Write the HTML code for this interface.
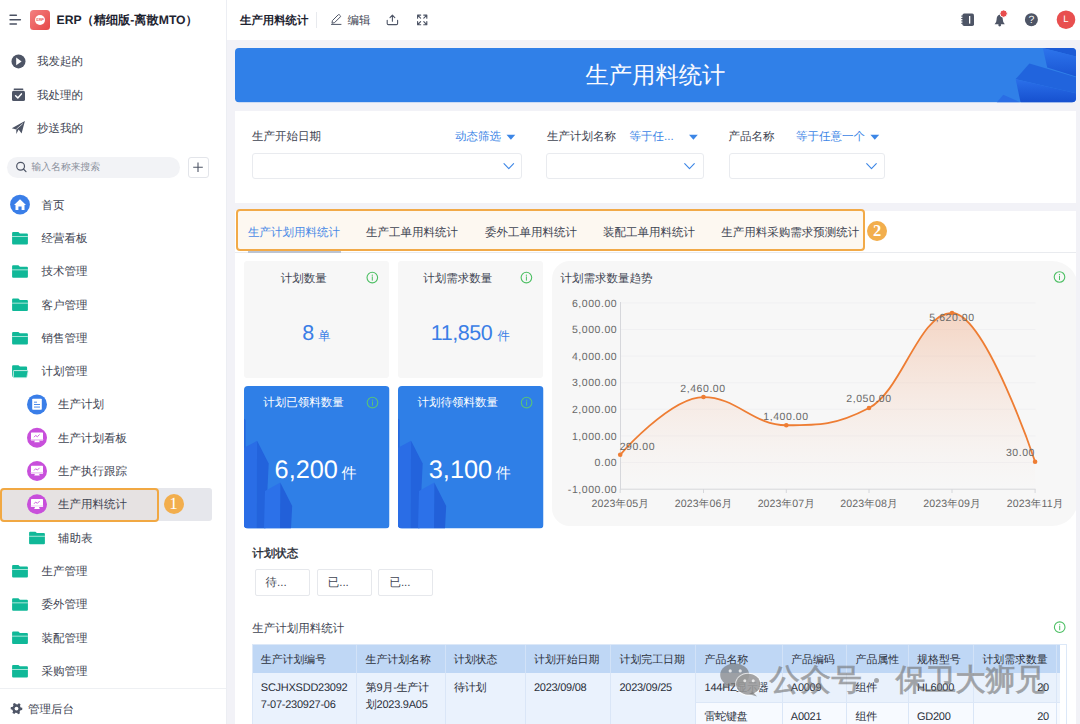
<!DOCTYPE html>
<html><head><meta charset="utf-8">
<style>
*{box-sizing:border-box;margin:0;padding:0}
html,body{text-rendering:geometricPrecision;width:1080px;height:724px;overflow:hidden;background:#f2f2f7;font-family:"Liberation Sans",sans-serif;color:#1f2329}
.a{position:absolute;white-space:nowrap}
svg.a{overflow:visible}
.t{position:absolute;white-space:nowrap;height:20px;line-height:20px}
</style></head><body>

<div class="a" style="left:0;top:0;width:226px;height:724px;background:#fff"></div>
<div class="a" style="left:226px;top:0;width:1px;height:724px;background:#eceef3"></div>
<svg class="a" style="left:0;top:0" width="30" height="40">
<rect x="9.3" y="14.4" width="7.8" height="1.5" rx="0.75" fill="#4b5263"/>
<rect x="9.3" y="19" width="11.8" height="1.5" rx="0.75" fill="#4b5263"/>
<rect x="9.3" y="23.3" width="7.8" height="1.5" rx="0.75" fill="#4b5263"/>
</svg>
<div class="a" style="left:30px;top:10px;width:20px;height:20px;border-radius:3.5px;background:linear-gradient(135deg,#f38080,#e64848)"></div>
<div class="a" style="left:35px;top:15px;width:10px;height:10px;border-radius:50%;background:#fff"></div>
<div class="a" style="left:35px;top:15px;width:10px;height:10px;font-size:4px;line-height:10px;text-align:center;color:#e95a5a;font-weight:bold;letter-spacing:-0.2px">ERP</div>
<div class="t" style="left:56.5px;top:10px;font-size:12.2px;font-weight:bold;color:#1d2330">ERP（精细版-离散MTO）</div>
<svg class="a" style="left:0;top:0" width="40" height="140">
<circle cx="18.5" cy="61.4" r="7" fill="#4e5566"/>
<path d="M16.2 57.6 L21.6 61.4 L16.2 65.2 Z" fill="#fff"/>
<rect x="13.6" y="88.6" width="9.8" height="1.3" rx="0.6" fill="#4e5566"/>
<rect x="12" y="90.8" width="13" height="10.2" rx="1.6" fill="#4e5566"/>
<path d="M15.6 95.8 L17.8 97.9 L21.4 93.9" stroke="#fff" stroke-width="1.5" fill="none" stroke-linecap="round" stroke-linejoin="round"/>
<path d="M11.8 128.2 L24.9 121 L21.6 133.5 L18.6 129.6 L16.4 134 L16.2 129.4 Z" fill="#4e5566"/>
<path d="M16.3 129.3 L22.8 123.6" stroke="#fff" stroke-width="0.7"/>
</svg>
<div class="t" style="left:37px;top:52.20px;font-size:11.5px;color:#3e4452;font-weight:normal">我发起的</div>
<div class="t" style="left:37px;top:85.70px;font-size:11.5px;color:#3e4452;font-weight:normal">我处理的</div>
<div class="t" style="left:37px;top:118.70px;font-size:11.5px;color:#3e4452;font-weight:normal">抄送我的</div>
<div class="a" style="left:7px;top:156.5px;width:173px;height:21px;border-radius:11px;background:#f2f3f6"></div>
<svg class="a" style="left:0;top:0" width="40" height="180">
<circle cx="20.6" cy="166.2" r="3.9" stroke="#4e5566" stroke-width="1.2" fill="none"/>
<path d="M23.4 169 L26 171.6" stroke="#4e5566" stroke-width="1.2" stroke-linecap="round"/>
</svg>
<div class="t" style="left:31.5px;top:157.70px;font-size:9.8px;color:#8a909c;font-weight:normal">输入名称来搜索</div>
<div class="a" style="left:187.5px;top:156.5px;width:21px;height:21px;border-radius:3px;border:1px solid #e3e5ea;background:#fff"></div>
<svg class="a" style="left:0;top:0" width="220" height="180">
<path d="M198 162.5 V172 M193.2 167.2 H202.8" stroke="#4e5566" stroke-width="1.1"/>
</svg>
<div class="a" style="left:1px;top:488px;width:211px;height:33px;border-radius:3px;background:#e6e7ec"></div>
<div class="a" style="left:0px;top:487.5px;width:159px;height:34px;border-radius:4px;border:2px solid #f1a843;background:rgba(240,160,60,0.06)"></div>
<div class="a" style="left:163.5px;top:494px;width:20px;height:20px;border-radius:50%;background:#f2ae4d;color:#fff;font-family:'Liberation Serif',serif;font-size:17px;line-height:20px;text-align:center">1</div>
<div class="t" style="left:41.5px;top:195.60px;font-size:11.5px;color:#3e4452;font-weight:normal">首页</div>
<div class="t" style="left:41.5px;top:228.90px;font-size:11.5px;color:#3e4452;font-weight:normal">经营看板</div>
<div class="t" style="left:41.5px;top:262.20px;font-size:11.5px;color:#3e4452;font-weight:normal">技术管理</div>
<div class="t" style="left:41.5px;top:295.50px;font-size:11.5px;color:#3e4452;font-weight:normal">客户管理</div>
<div class="t" style="left:41.5px;top:328.80px;font-size:11.5px;color:#3e4452;font-weight:normal">销售管理</div>
<div class="t" style="left:41.5px;top:362.10px;font-size:11.5px;color:#3e4452;font-weight:normal">计划管理</div>
<div class="t" style="left:58px;top:395.40px;font-size:11.5px;color:#3e4452;font-weight:normal">生产计划</div>
<div class="t" style="left:58px;top:428.70px;font-size:11.5px;color:#3e4452;font-weight:normal">生产计划看板</div>
<div class="t" style="left:58px;top:462.00px;font-size:11.5px;color:#3e4452;font-weight:normal">生产执行跟踪</div>
<div class="t" style="left:58px;top:495.30px;font-size:11.5px;color:#3e4452;font-weight:normal">生产用料统计</div>
<div class="t" style="left:58px;top:528.60px;font-size:11.5px;color:#3e4452;font-weight:normal">辅助表</div>
<div class="t" style="left:41.5px;top:561.90px;font-size:11.5px;color:#3e4452;font-weight:normal">生产管理</div>
<div class="t" style="left:41.5px;top:595.20px;font-size:11.5px;color:#3e4452;font-weight:normal">委外管理</div>
<div class="t" style="left:41.5px;top:628.50px;font-size:11.5px;color:#3e4452;font-weight:normal">装配管理</div>
<div class="t" style="left:41.5px;top:661.80px;font-size:11.5px;color:#3e4452;font-weight:normal">采购管理</div>
<svg class="a" style="left:0;top:0" width="60" height="724"><circle cx="20" cy="204.6" r="9.9" fill="#3a7ee8"/><path d="M20 199.29999999999998 L26 204.9 L24.5 204.9 L24.5 209.9 L21.6 209.9 L21.6 206.6 L18.4 206.6 L18.4 209.9 L15.5 209.9 L15.5 204.9 L14 204.9 Z" fill="#fff"/><path d="M12.1 232.99999999999997 Q12.1 231.99999999999997 13.1 231.99999999999997 L18.4 231.99999999999997 L19.9 233.39999999999998 L26.9 233.39999999999998 Q27.9 233.39999999999998 27.9 234.39999999999998 L27.9 243.49999999999997 Q27.9 244.49999999999997 26.9 244.49999999999997 L13.1 244.49999999999997 Q12.1 244.49999999999997 12.1 243.49999999999997 Z" fill="#10b898"/><rect x="12.1" y="236.09999999999997" width="15.8" height="0.9" fill="#b8eadf"/><path d="M12.1 266.3 Q12.1 265.3 13.1 265.3 L18.4 265.3 L19.9 266.7 L26.9 266.7 Q27.9 266.7 27.9 267.7 L27.9 276.8 Q27.9 277.8 26.9 277.8 L13.1 277.8 Q12.1 277.8 12.1 276.8 Z" fill="#10b898"/><rect x="12.1" y="269.4" width="15.8" height="0.9" fill="#b8eadf"/><path d="M12.1 299.6 Q12.1 298.6 13.1 298.6 L18.4 298.6 L19.9 300.0 L26.9 300.0 Q27.9 300.0 27.9 301.0 L27.9 310.1 Q27.9 311.1 26.9 311.1 L13.1 311.1 Q12.1 311.1 12.1 310.1 Z" fill="#10b898"/><rect x="12.1" y="302.7" width="15.8" height="0.9" fill="#b8eadf"/><path d="M12.1 332.9 Q12.1 331.9 13.1 331.9 L18.4 331.9 L19.9 333.29999999999995 L26.9 333.29999999999995 Q27.9 333.29999999999995 27.9 334.29999999999995 L27.9 343.4 Q27.9 344.4 26.9 344.4 L13.1 344.4 Q12.1 344.4 12.1 343.4 Z" fill="#10b898"/><rect x="12.1" y="335.99999999999994" width="15.8" height="0.9" fill="#b8eadf"/><path d="M12.1 376.70000000000005 L12.1 366.20000000000005 Q12.1 365.20000000000005 13.1 365.20000000000005 L18.4 365.20000000000005 L19.9 366.6 L26.1 366.6 Q27.1 366.6 27.1 367.6 L27.1 369.90000000000003 L13.7 369.90000000000003 L12.7 376.70000000000005 Z" fill="#10b898"/><path d="M14.2 370.6 L27.4 370.6 Q28.1 370.6 28.0 371.40000000000003 L26.9 376.90000000000003 Q26.7 377.70000000000005 25.9 377.70000000000005 L14.0 377.70000000000005 Q13.2 377.70000000000005 13.299999999999999 376.90000000000003 L13.5 371.3 Q13.6 370.6 14.2 370.6 Z" fill="#10b898" stroke="#c5eee4" stroke-width="0.8"/><circle cx="37" cy="404.4" r="10" fill="#3a7ee8"/><rect x="32.2" y="398.79999999999995" width="9.6" height="11" rx="0.8" fill="#fff"/><rect x="34" y="401.7" width="3" height="0.9" fill="#3a7ee8"/><rect x="34" y="404.09999999999997" width="6" height="0.9" fill="#3a7ee8"/><rect x="34" y="406.59999999999997" width="6" height="0.9" fill="#3a7ee8"/><circle cx="37" cy="437.69999999999993" r="10" fill="#c84fdb"/><rect x="31" y="432.49999999999994" width="12" height="8" rx="0.6" fill="#fff"/><path d="M34 437.19999999999993 L35.6 435.49999999999994 L37.4 436.69999999999993 L39.6 434.49999999999994" stroke="#c84fdb" stroke-width="0.9" fill="none"/><rect x="30.6" y="438.99999999999994" width="12.8" height="0.7" fill="#e9b6f0"/><path d="M35 440.49999999999994 L39 440.49999999999994 L39.8 442.29999999999995 L34.2 442.29999999999995 Z" fill="#fff"/><circle cx="37" cy="471.0" r="10" fill="#c84fdb"/><rect x="31" y="465.8" width="12" height="8" rx="0.6" fill="#fff"/><path d="M34 470.5 L35.6 468.8 L37.4 470.0 L39.6 467.8" stroke="#c84fdb" stroke-width="0.9" fill="none"/><rect x="30.6" y="472.3" width="12.8" height="0.7" fill="#e9b6f0"/><path d="M35 473.8 L39 473.8 L39.8 475.6 L34.2 475.6 Z" fill="#fff"/><circle cx="37" cy="504.29999999999995" r="10" fill="#c84fdb"/><rect x="31" y="499.09999999999997" width="12" height="8" rx="0.6" fill="#fff"/><path d="M34 503.79999999999995 L35.6 502.09999999999997 L37.4 503.29999999999995 L39.6 501.09999999999997" stroke="#c84fdb" stroke-width="0.9" fill="none"/><rect x="30.6" y="505.59999999999997" width="12.8" height="0.7" fill="#e9b6f0"/><path d="M35 507.09999999999997 L39 507.09999999999997 L39.8 508.9 L34.2 508.9 Z" fill="#fff"/><path d="M29.1 532.7 Q29.1 531.7 30.1 531.7 L35.4 531.7 L36.9 533.1 L43.900000000000006 533.1 Q44.900000000000006 533.1 44.900000000000006 534.1 L44.900000000000006 543.2 Q44.900000000000006 544.2 43.900000000000006 544.2 L30.1 544.2 Q29.1 544.2 29.1 543.2 Z" fill="#10b898"/><rect x="29.1" y="535.8000000000001" width="15.8" height="0.9" fill="#b8eadf"/><path d="M12.1 566.0 Q12.1 565.0 13.1 565.0 L18.4 565.0 L19.9 566.4 L26.9 566.4 Q27.9 566.4 27.9 567.4 L27.9 576.5 Q27.9 577.5 26.9 577.5 L13.1 577.5 Q12.1 577.5 12.1 576.5 Z" fill="#10b898"/><rect x="12.1" y="569.1" width="15.8" height="0.9" fill="#b8eadf"/><path d="M12.1 599.3 Q12.1 598.3 13.1 598.3 L18.4 598.3 L19.9 599.6999999999999 L26.9 599.6999999999999 Q27.9 599.6999999999999 27.9 600.6999999999999 L27.9 609.8 Q27.9 610.8 26.9 610.8 L13.1 610.8 Q12.1 610.8 12.1 609.8 Z" fill="#10b898"/><rect x="12.1" y="602.4" width="15.8" height="0.9" fill="#b8eadf"/><path d="M12.1 632.6 Q12.1 631.6 13.1 631.6 L18.4 631.6 L19.9 633.0 L26.9 633.0 Q27.9 633.0 27.9 634.0 L27.9 643.1 Q27.9 644.1 26.9 644.1 L13.1 644.1 Q12.1 644.1 12.1 643.1 Z" fill="#10b898"/><rect x="12.1" y="635.7" width="15.8" height="0.9" fill="#b8eadf"/><path d="M12.1 665.9 Q12.1 664.9 13.1 664.9 L18.4 664.9 L19.9 666.3 L26.9 666.3 Q27.9 666.3 27.9 667.3 L27.9 676.4 Q27.9 677.4 26.9 677.4 L13.1 677.4 Q12.1 677.4 12.1 676.4 Z" fill="#10b898"/><rect x="12.1" y="669.0" width="15.8" height="0.9" fill="#b8eadf"/></svg>
<div class="a" style="left:0;top:688px;width:226px;height:1px;background:#eef0f3"></div>
<svg class="a" style="left:0;top:0" width="30" height="724"><polygon points="22.30,708.60 22.25,709.36 22.10,710.10 20.47,710.25 20.22,710.75 19.91,711.22 19.54,711.64 20.03,713.20 19.40,713.62 18.72,713.96 18.00,714.20 17.06,712.86 16.50,712.90 15.94,712.86 15.39,712.75 14.28,713.96 13.60,713.62 12.97,713.20 12.40,712.70 13.09,711.22 12.78,710.75 12.53,710.25 12.35,709.71 10.75,709.36 10.70,708.60 10.75,707.84 10.90,707.10 12.53,706.95 12.78,706.45 13.09,705.98 13.46,705.56 12.97,704.00 13.60,703.58 14.28,703.24 15.00,703.00 15.94,704.34 16.50,704.30 17.06,704.34 17.61,704.45 18.72,703.24 19.40,703.58 20.03,704.00 20.60,704.50 19.91,705.98 20.22,706.45 20.47,706.95 20.65,707.49 22.25,707.84" fill="#4e5566"/><circle cx="16.5" cy="708.6" r="1.9" fill="#fff"/></svg>
<div class="t" style="left:28px;top:699.70px;font-size:11.5px;color:#3e4452;font-weight:normal">管理后台</div>
<div class="a" style="left:227px;top:0;width:853px;height:40px;background:#fff"></div>
<div class="t" style="left:240px;top:11.20px;font-size:11.4px;color:#1d2330;font-weight:bold">生产用料统计</div>
<div class="a" style="left:316px;top:12px;width:1px;height:15.5px;background:#e8eaee"></div>
<svg class="a" style="left:0;top:0" width="1080" height="40">
<path d="M331.5 24.4 H341" stroke="#4e5566" stroke-width="1" stroke-linecap="round"/>
<path d="M332 23.2 L332.4 20.6 L338.2 14.8 Q338.8 14.3 339.4 14.8 L340.3 15.7 Q340.8 16.3 340.3 16.9 L334.5 22.7 Z" stroke="#4e5566" stroke-width="1" fill="none" stroke-linejoin="round"/>
<path d="M392.4 21.2 V15.2 M390 17.6 L392.4 15.2 L394.8 17.6" stroke="#4e5566" stroke-width="1.1" fill="none" stroke-linecap="round" stroke-linejoin="round"/>
<path d="M387.2 20.2 V23.4 Q387.2 24.6 388.4 24.6 H396.4 Q397.6 24.6 397.6 23.4 V20.2" stroke="#4e5566" stroke-width="1.1" fill="none" stroke-linecap="round"/>
<g stroke="#4e5566" stroke-width="1.15" fill="none" stroke-linecap="round" stroke-linejoin="round">
<path d="M417.6 18.2 V15.1 H420.7 M417.8 15.3 L420.6 18.1"/>
<path d="M426.8 18.2 V15.1 H423.7 M426.6 15.3 L423.8 18.1"/>
<path d="M417.6 21.6 V24.7 H420.7 M417.8 24.5 L420.6 21.7"/>
<path d="M426.8 21.6 V24.7 H423.7 M426.6 24.5 L423.8 21.7"/>
</g>
<rect x="962.4" y="13.6" width="11.6" height="12.4" rx="1.8" fill="#4e5566"/>
<rect x="961.2" y="15.6" width="2.2" height="1" fill="#4e5566"/>
<rect x="961.2" y="18" width="2.2" height="1" fill="#4e5566"/>
<rect x="961.2" y="20.4" width="2.2" height="1" fill="#4e5566"/>
<rect x="961.2" y="22.8" width="2.2" height="1" fill="#4e5566"/>
<rect x="969" y="16" width="1.3" height="7.6" fill="#fff"/>
<path d="M994.6 24.3 Q996.6 22.6 996.6 19.6 Q996.6 15.6 999.7 14.6 Q1002.8 15.6 1002.8 19.6 Q1002.8 22.6 1004.8 24.3 Z" fill="#4e5566"/>
<circle cx="999.7" cy="25" r="1.4" fill="#4e5566"/>
<circle cx="1003.6" cy="13.6" r="3.7" fill="#e84d4d" stroke="#fff" stroke-width="1"/>
<circle cx="1031.4" cy="19.7" r="6.5" fill="#4e5566"/>
<circle cx="1066" cy="19.7" r="9.3" fill="#e84f4f"/>
</svg>
<div class="a" style="left:1025.4px;top:13.7px;width:12px;height:12px;font-size:10.5px;line-height:12px;text-align:center;color:#fff">?</div>
<div class="a" style="left:1060px;top:13.7px;width:12px;height:12px;font-size:9.5px;line-height:12px;text-align:center;color:#fff">L</div>
<svg class="a" style="left:235px;top:48.2px" width="841" height="54.4" viewBox="0 0 841 54" preserveAspectRatio="none">
<defs>
<clipPath id="bc"><rect x="0" y="0" width="841" height="54" rx="4"/></clipPath>
<linearGradient id="g1" x1="0" y1="0" x2="0" y2="1"><stop offset="0" stop-color="#2d74ec"/><stop offset="1" stop-color="#1a56d4"/></linearGradient>
<linearGradient id="g2" x1="0" y1="0" x2="0" y2="1"><stop offset="0" stop-color="#2b70ea"/><stop offset="1" stop-color="#1650cf"/></linearGradient>
</defs>
<g clip-path="url(#bc)">
<rect x="0" y="0" width="841" height="54" fill="#3080e8"/>
<path d="M807.8 0 L841 0 L841 8.5 Z" fill="#1c5bd6"/>
<path d="M807.8 0 L812.2 19.3 L841 28.2 L841 8.5 Z" fill="url(#g1)"/>
<path d="M780.6 30.9 L794.4 15.4 L841 29 L841 45 Z" fill="#2164dd"/>
<path d="M780.6 30.9 L841 45 L841 54 L785.6 54 Z" fill="url(#g2)"/>
<path d="M761.7 54 L768.3 46.5 L785.6 54 Z" fill="#2a6de4"/>
</g>
</svg>
<div class="a" style="left:585.5px;top:58.8px;height:32px;line-height:32px;font-size:23.3px;color:#fafbff">生产用料统计</div>
<div class="a" style="left:235px;top:111px;width:841px;height:92px;background:#fff"></div>
<div class="t" style="left:252px;top:126.70px;font-size:11.5px;color:#3e4452;font-weight:normal">生产开始日期</div>
<div class="t" style="left:455px;top:126.70px;font-size:11.5px;color:#3c86e6;font-weight:normal">动态筛选</div>
<div class="t" style="left:547px;top:126.70px;font-size:11.5px;color:#3e4452;font-weight:normal">生产计划名称</div>
<div class="t" style="left:629.5px;top:126.70px;font-size:11.5px;color:#3c86e6;font-weight:normal">等于任...</div>
<div class="t" style="left:728.5px;top:126.70px;font-size:11.5px;color:#3e4452;font-weight:normal">产品名称</div>
<div class="t" style="left:796px;top:126.70px;font-size:11.5px;color:#3c86e6;font-weight:normal">等于任意一个</div>
<div class="a" style="left:251.5px;top:152.7px;width:270.0px;height:26.5px;border:1px solid #e9ebef;border-radius:3px;background:#fff"></div>
<div class="a" style="left:546.3px;top:152.7px;width:157.70000000000005px;height:26.5px;border:1px solid #e9ebef;border-radius:3px;background:#fff"></div>
<div class="a" style="left:728.5px;top:152.7px;width:156.79999999999995px;height:26.5px;border:1px solid #e9ebef;border-radius:3px;background:#fff"></div>
<svg class="a" style="left:0;top:0" width="1080" height="200"><path d="M506.5 134.8 L515.3 134.8 L510.9 139.8 Z" fill="#3c86e6"/><path d="M689 134.8 L697.8 134.8 L693.4 139.8 Z" fill="#3c86e6"/><path d="M870.4 134.8 L879.1999999999999 134.8 L874.8 139.8 Z" fill="#3c86e6"/><path d="M504.0 163.6 L508.8 168.6 L513.6 163.6" stroke="#3c86e6" stroke-width="1.1" fill="none" stroke-linecap="round" stroke-linejoin="round"/><path d="M684.7 163.6 L689.5 168.6 L694.3 163.6" stroke="#3c86e6" stroke-width="1.1" fill="none" stroke-linecap="round" stroke-linejoin="round"/><path d="M866.7 163.6 L871.5 168.6 L876.3 163.6" stroke="#3c86e6" stroke-width="1.1" fill="none" stroke-linecap="round" stroke-linejoin="round"/></svg>
<div class="a" style="left:235px;top:210.5px;width:841px;height:514px;background:#fff"></div>
<div class="a" style="left:235px;top:251.5px;width:841px;height:1px;background:#e9ebef"></div>
<div class="a" style="left:248px;top:251px;width:93px;height:2px;background:#bcc4d2"></div>
<div class="a" style="left:235.5px;top:209.4px;width:629.5px;height:41.8px;border:2px solid #f2aa48;border-radius:4px;background:#fdf8f1"></div>
<div class="t" style="left:248px;top:222.70px;font-size:11.5px;color:#4a8ae6;font-weight:normal">生产计划用料统计</div>
<div class="t" style="left:366px;top:222.70px;font-size:11.5px;color:#3e4452;font-weight:normal">生产工单用料统计</div>
<div class="t" style="left:485px;top:222.70px;font-size:11.5px;color:#3e4452;font-weight:normal">委外工单用料统计</div>
<div class="t" style="left:603px;top:222.70px;font-size:11.5px;color:#3e4452;font-weight:normal">装配工单用料统计</div>
<div class="t" style="left:721.3px;top:222.70px;font-size:11.5px;color:#3e4452;font-weight:normal">生产用料采购需求预测统计</div>
<div class="a" style="left:867.3px;top:221.1px;width:19.8px;height:19.8px;border-radius:50%;background:#f2ae4d;color:#fff;font-family:'Liberation Serif',serif;font-weight:bold;font-size:16.5px;line-height:20px;text-align:center">2</div>
<div class="t" style="left:347.5px;top:11.20px;font-size:11.5px;color:#3e4452;font-weight:normal">编辑</div>
<div class="a" style="left:243.5px;top:261px;width:145.5px;height:117px;border-radius:3px;background:#f7f7f7"></div>
<div class="a" style="left:397.5px;top:261px;width:145.5px;height:117px;border-radius:3px;background:#f7f7f7"></div>
<div class="t" style="left:280.8px;top:268.70px;font-size:11.5px;color:#3e4452;font-weight:normal">计划数量</div>
<div class="t" style="left:423.2px;top:268.70px;font-size:11.5px;color:#3e4452;font-weight:normal">计划需求数量</div>
<div class="t" style="left:302.3px;top:320.6px;height:24px;line-height:24px;font-size:21.5px;color:#3a7ee6">8</div>
<div class="t" style="left:318.3px;top:325.50px;font-size:12.3px;color:#3a7ee6;font-weight:normal">单</div>
<div class="t" style="left:430.8px;top:320.6px;height:24px;line-height:24px;font-size:21.5px;letter-spacing:-0.45px;color:#3a7ee6">11,850</div>
<div class="t" style="left:497.6px;top:325.50px;font-size:12.3px;color:#3a7ee6;font-weight:normal">件</div>
<svg class="a" style="left:243.5px;top:385.5px" width="145.5" height="142.5" viewBox="0 0 145.5 142.5">
<defs><clipPath id="cc243"><rect x="0" y="0" width="145.5" height="142.5" rx="4"/></clipPath>
<linearGradient id="cg243" x1="0" y1="0" x2="1" y2="0"><stop offset="0" stop-color="#1f63dc"/><stop offset="1" stop-color="#2c74e6"/></linearGradient></defs>
<g clip-path="url(#cc243)">
<rect x="0" y="0" width="145.5" height="142.5" fill="#2f7fe7"/>
<path d="M0 32.5 L1.6 34 L1.6 142.5 L0 142.5 Z" fill="#2468de"/>
<path d="M0 61.8 L13.1 54.8 L12.5 142.5 L0 142.5 Z" fill="#2a6de6"/>
<path d="M13.1 54.8 L24.7 77.5 L21.5 142.5 L12.5 142.5 Z" fill="#2363dc"/>
<path d="M21 104.9 L36.3 96.6 L36 142.5 L20 142.5 Z" fill="#2c71e9"/>
<path d="M36.3 96.6 L48.2 119.9 L47 142.5 L36 142.5 Z" fill="#2260d9"/>
</g></svg>
<svg class="a" style="left:397.5px;top:385.5px" width="145.5" height="142.5" viewBox="0 0 145.5 142.5">
<defs><clipPath id="cc397"><rect x="0" y="0" width="145.5" height="142.5" rx="4"/></clipPath>
<linearGradient id="cg397" x1="0" y1="0" x2="1" y2="0"><stop offset="0" stop-color="#1f63dc"/><stop offset="1" stop-color="#2c74e6"/></linearGradient></defs>
<g clip-path="url(#cc397)">
<rect x="0" y="0" width="145.5" height="142.5" fill="#2f7fe7"/>
<path d="M0 32.5 L1.6 34 L1.6 142.5 L0 142.5 Z" fill="#2468de"/>
<path d="M0 61.8 L13.1 54.8 L12.5 142.5 L0 142.5 Z" fill="#2a6de6"/>
<path d="M13.1 54.8 L24.7 77.5 L21.5 142.5 L12.5 142.5 Z" fill="#2363dc"/>
<path d="M21 104.9 L36.3 96.6 L36 142.5 L20 142.5 Z" fill="#2c71e9"/>
<path d="M36.3 96.6 L48.2 119.9 L47 142.5 L36 142.5 Z" fill="#2260d9"/>
</g></svg>
<div class="t" style="left:263.3px;top:393.20px;font-size:11.5px;color:#ffffff;font-weight:normal">计划已领料数量</div>
<div class="t" style="left:417.6px;top:393.20px;font-size:11.5px;color:#ffffff;font-weight:normal">计划待领料数量</div>
<div class="t" style="left:274.6px;top:455px;height:30px;line-height:30px;font-size:25.3px;color:#fff">6,200</div>
<div class="t" style="left:341.6px;top:463.90px;font-size:15px;color:#ffffff;font-weight:normal">件</div>
<div class="t" style="left:428.8px;top:455px;height:30px;line-height:30px;font-size:25.3px;color:#fff">3,100</div>
<div class="t" style="left:495.8px;top:463.90px;font-size:15px;color:#ffffff;font-weight:normal">件</div>
<div class="a" style="left:551.5px;top:261px;width:524.5px;height:265px;overflow:hidden"><div style="position:absolute;left:0;top:0;width:526.5px;height:265px;border-radius:18px 26px 26px 18px;background:#f7f7f7"></div></div>
<svg class="a" style="left:0;top:0" width="1080" height="724"><circle cx="372.3" cy="277.6" r="5.3" stroke="#4cbf63" stroke-width="1.1" fill="none"/><circle cx="372.3" cy="275.20000000000005" r="0.65" fill="#4cbf63"/><rect x="371.8" y="276.40000000000003" width="1" height="4.2" fill="#4cbf63"/><circle cx="526.4" cy="277.6" r="5.3" stroke="#4cbf63" stroke-width="1.1" fill="none"/><circle cx="526.4" cy="275.20000000000005" r="0.65" fill="#4cbf63"/><rect x="525.9" y="276.40000000000003" width="1" height="4.2" fill="#4cbf63"/><circle cx="372.5" cy="402.6" r="5.3" stroke="#58c27a" stroke-width="1.1" fill="none"/><circle cx="372.5" cy="400.20000000000005" r="0.65" fill="#58c27a"/><rect x="372.0" y="401.40000000000003" width="1" height="4.2" fill="#58c27a"/><circle cx="526.6" cy="402.6" r="5.3" stroke="#58c27a" stroke-width="1.1" fill="none"/><circle cx="526.6" cy="400.20000000000005" r="0.65" fill="#58c27a"/><rect x="526.1" y="401.40000000000003" width="1" height="4.2" fill="#58c27a"/><circle cx="1059.5" cy="277" r="5.3" stroke="#4cbf63" stroke-width="1.1" fill="none"/><circle cx="1059.5" cy="274.6" r="0.65" fill="#4cbf63"/><rect x="1059.0" y="275.8" width="1" height="4.2" fill="#4cbf63"/><circle cx="1059.7" cy="627.2" r="5.3" stroke="#4cbf63" stroke-width="1.1" fill="none"/><circle cx="1059.7" cy="624.8000000000001" r="0.65" fill="#4cbf63"/><rect x="1059.2" y="626.0" width="1" height="4.2" fill="#4cbf63"/></svg>
<div class="t" style="left:560.5px;top:268.70px;font-size:11.5px;color:#3e4452;font-weight:normal">计划需求数量趋势</div>
<svg class="a" style="left:0;top:0" width="1080" height="724">
<defs><linearGradient id="ag" x1="0" y1="310" x2="0" y2="489" gradientUnits="userSpaceOnUse">
<stop offset="0" stop-color="#f0a47a" stop-opacity="0.42"/><stop offset="0.85" stop-color="#f5c7ae" stop-opacity="0.05"/><stop offset="1" stop-color="#f5c7ae" stop-opacity="0"/></linearGradient></defs>
<rect x="620.5" y="462.00" width="415" height="1" fill="#f0f0f2"/><rect x="620.5" y="435.40" width="415" height="1" fill="#f0f0f2"/><rect x="620.5" y="408.80" width="415" height="1" fill="#f0f0f2"/><rect x="620.5" y="382.20" width="415" height="1" fill="#f0f0f2"/><rect x="620.5" y="355.60" width="415" height="1" fill="#f0f0f2"/><rect x="620.5" y="329.00" width="415" height="1" fill="#f0f0f2"/><rect x="620.5" y="302.40" width="415" height="1" fill="#f0f0f2"/>
<path d="M620.20 454.79 C620.20 454.79 670.18 397.06 703.50 397.06 C736.62 397.06 753.18 425.26 786.30 425.26 C819.38 425.26 835.92 425.26 869.00 407.97 C902.20 390.68 918.80 313.01 952.00 313.01 C985.24 313.01 1035.10 461.70 1035.10 461.70 L1035.1 489 L620.2 489 Z" fill="url(#ag)"/>
<rect x="620" y="302" width="1" height="187.5" fill="#d6d7db"/>
<rect x="620" y="488.7" width="415.5" height="1" fill="#d6d7db"/>
<rect x="619.7" y="489" width="1" height="4" fill="#d6d7db"/><rect x="703.0" y="489" width="1" height="4" fill="#d6d7db"/><rect x="785.8" y="489" width="1" height="4" fill="#d6d7db"/><rect x="868.5" y="489" width="1" height="4" fill="#d6d7db"/><rect x="951.5" y="489" width="1" height="4" fill="#d6d7db"/><rect x="1034.6" y="489" width="1" height="4" fill="#d6d7db"/>
<path d="M620.20 454.79 C620.20 454.79 670.18 397.06 703.50 397.06 C736.62 397.06 753.18 425.26 786.30 425.26 C819.38 425.26 835.92 425.26 869.00 407.97 C902.20 390.68 918.80 313.01 952.00 313.01 C985.24 313.01 1035.10 461.70 1035.10 461.70" stroke="#ee7d33" stroke-width="1.8" fill="none"/>
<circle cx="620.2" cy="454.79" r="2.3" fill="#ee7d33"/><circle cx="703.5" cy="397.06" r="2.3" fill="#ee7d33"/><circle cx="786.3" cy="425.26" r="2.3" fill="#ee7d33"/><circle cx="869" cy="407.97" r="2.3" fill="#ee7d33"/><circle cx="952" cy="313.01" r="2.3" fill="#ee7d33"/><circle cx="1035.1" cy="461.70" r="2.3" fill="#ee7d33"/></svg>
<div class="a" style="left:540px;top:481.70px;width:77.2px;height:16px;line-height:16px;text-align:right;font-size:10.5px;letter-spacing:0.55px;color:#686868">-1,000.00</div><div class="a" style="left:540px;top:455.10px;width:77.2px;height:16px;line-height:16px;text-align:right;font-size:10.5px;letter-spacing:0.55px;color:#686868">0.00</div><div class="a" style="left:540px;top:428.50px;width:77.2px;height:16px;line-height:16px;text-align:right;font-size:10.5px;letter-spacing:0.55px;color:#686868">1,000.00</div><div class="a" style="left:540px;top:401.90px;width:77.2px;height:16px;line-height:16px;text-align:right;font-size:10.5px;letter-spacing:0.55px;color:#686868">2,000.00</div><div class="a" style="left:540px;top:375.30px;width:77.2px;height:16px;line-height:16px;text-align:right;font-size:10.5px;letter-spacing:0.55px;color:#686868">3,000.00</div><div class="a" style="left:540px;top:348.70px;width:77.2px;height:16px;line-height:16px;text-align:right;font-size:10.5px;letter-spacing:0.55px;color:#686868">4,000.00</div><div class="a" style="left:540px;top:322.10px;width:77.2px;height:16px;line-height:16px;text-align:right;font-size:10.5px;letter-spacing:0.55px;color:#686868">5,000.00</div><div class="a" style="left:540px;top:295.50px;width:77.2px;height:16px;line-height:16px;text-align:right;font-size:10.5px;letter-spacing:0.55px;color:#686868">6,000.00</div>
<div class="a" style="left:580.2px;top:495.5px;width:80px;height:16px;line-height:16px;text-align:center;font-size:10.6px;letter-spacing:0.1px;color:#686868">2023年05月</div>
<div class="a" style="left:663.5px;top:495.5px;width:80px;height:16px;line-height:16px;text-align:center;font-size:10.6px;letter-spacing:0.1px;color:#686868">2023年06月</div>
<div class="a" style="left:746.3px;top:495.5px;width:80px;height:16px;line-height:16px;text-align:center;font-size:10.6px;letter-spacing:0.1px;color:#686868">2023年07月</div>
<div class="a" style="left:829px;top:495.5px;width:80px;height:16px;line-height:16px;text-align:center;font-size:10.6px;letter-spacing:0.1px;color:#686868">2023年08月</div>
<div class="a" style="left:912px;top:495.5px;width:80px;height:16px;line-height:16px;text-align:center;font-size:10.6px;letter-spacing:0.1px;color:#686868">2023年09月</div>
<div class="a" style="left:995.0999999999999px;top:495.5px;width:80px;height:16px;line-height:16px;text-align:center;font-size:10.6px;letter-spacing:0.1px;color:#686868">2023年11月</div>
<div class="a" style="left:619.7px;top:438.6px;width:80px;height:16px;line-height:16px;text-align:left;font-size:10.5px;letter-spacing:0.55px;color:#686868">290.00</div>
<div class="a" style="left:663px;top:380.5px;width:80px;height:16px;line-height:16px;text-align:center;font-size:10.5px;letter-spacing:0.55px;color:#686868">2,460.00</div>
<div class="a" style="left:746px;top:408.5px;width:80px;height:16px;line-height:16px;text-align:center;font-size:10.5px;letter-spacing:0.55px;color:#686868">1,400.00</div>
<div class="a" style="left:829px;top:391.2px;width:80px;height:16px;line-height:16px;text-align:center;font-size:10.5px;letter-spacing:0.55px;color:#686868">2,050.00</div>
<div class="a" style="left:912px;top:309.6px;width:80px;height:16px;line-height:16px;text-align:center;font-size:10.5px;letter-spacing:0.55px;color:#686868">5,620.00</div>
<div class="a" style="left:955px;top:445.4px;width:80px;height:16px;line-height:16px;text-align:right;font-size:10.5px;letter-spacing:0.55px;color:#686868">30.00</div>
<div class="t" style="left:252.3px;top:544.2px;font-size:11.5px;color:#262a33;-webkit-text-stroke:0.35px #262a33">计划状态</div>
<div class="a" style="left:255px;top:569px;width:54.80000000000001px;height:26.5px;border:1px solid #e6e8ec;border-radius:2px;background:#fff"></div>
<div class="t" style="left:265.6px;top:573.00px;font-size:11.5px;color:#3e4452;font-weight:normal">待...</div>
<div class="a" style="left:316.5px;top:569px;width:55.0px;height:26.5px;border:1px solid #e6e8ec;border-radius:2px;background:#fff"></div>
<div class="t" style="left:327.7px;top:573.00px;font-size:11.5px;color:#3e4452;font-weight:normal">已...</div>
<div class="a" style="left:378.4px;top:569px;width:54.200000000000045px;height:26.5px;border:1px solid #e6e8ec;border-radius:2px;background:#fff"></div>
<div class="t" style="left:389.4px;top:573.00px;font-size:11.5px;color:#3e4452;font-weight:normal">已...</div>
<div class="t" style="left:252.3px;top:618.70px;font-size:11.5px;color:#3e4452;font-weight:normal">生产计划用料统计</div>
<div class="a" style="left:252px;top:644.2px;width:815.4px;height:80px;border:1px solid #dce8f8;border-bottom:none;background:#fff"></div>
<div class="a" style="left:252.5px;top:644.7px;width:807.5px;height:28px;background:#bfd7f5"></div>
<div class="a" style="left:252.5px;top:672.7px;width:443.3px;height:52px;background:#eaf2fd"></div>
<div class="a" style="left:695.8px;top:672.7px;width:364.2px;height:29.5px;background:#e9f1fc"></div>
<div class="a" style="left:695.8px;top:702.2px;width:364.2px;height:22px;background:#f7faff"></div>
<div class="a" style="left:356.2px;top:644.7px;width:1px;height:28px;background:#d2e2f7"></div>
<div class="a" style="left:356.2px;top:672.7px;width:1px;height:52px;background:#dae6f7"></div>
<div class="a" style="left:444.5px;top:644.7px;width:1px;height:28px;background:#d2e2f7"></div>
<div class="a" style="left:444.5px;top:672.7px;width:1px;height:52px;background:#dae6f7"></div>
<div class="a" style="left:524.7px;top:644.7px;width:1px;height:28px;background:#d2e2f7"></div>
<div class="a" style="left:524.7px;top:672.7px;width:1px;height:52px;background:#dae6f7"></div>
<div class="a" style="left:610.2px;top:644.7px;width:1px;height:28px;background:#d2e2f7"></div>
<div class="a" style="left:610.2px;top:672.7px;width:1px;height:52px;background:#dae6f7"></div>
<div class="a" style="left:695.3px;top:644.7px;width:1px;height:28px;background:#d2e2f7"></div>
<div class="a" style="left:695.3px;top:672.7px;width:1px;height:52px;background:#dae6f7"></div>
<div class="a" style="left:781.9px;top:644.7px;width:1px;height:28px;background:#d2e2f7"></div>
<div class="a" style="left:781.9px;top:672.7px;width:1px;height:52px;background:#dae6f7"></div>
<div class="a" style="left:846.2px;top:644.7px;width:1px;height:28px;background:#d2e2f7"></div>
<div class="a" style="left:846.2px;top:672.7px;width:1px;height:52px;background:#dae6f7"></div>
<div class="a" style="left:907.8px;top:644.7px;width:1px;height:28px;background:#d2e2f7"></div>
<div class="a" style="left:907.8px;top:672.7px;width:1px;height:52px;background:#dae6f7"></div>
<div class="a" style="left:973.1px;top:644.7px;width:1px;height:28px;background:#d2e2f7"></div>
<div class="a" style="left:973.1px;top:672.7px;width:1px;height:52px;background:#dae6f7"></div>
<div class="a" style="left:1056.0px;top:644.7px;width:1px;height:28px;background:#d2e2f7"></div>
<div class="a" style="left:1056.0px;top:672.7px;width:1px;height:52px;background:#dae6f7"></div>
<div class="a" style="left:695.8px;top:701.7px;width:364.2px;height:1px;background:#dce7f7"></div>
<div class="t" style="left:260.8px;top:649.50px;font-size:10.9px;color:#2b303b;font-weight:normal">生产计划编号</div>
<div class="t" style="left:365.5px;top:649.50px;font-size:10.9px;color:#2b303b;font-weight:normal">生产计划名称</div>
<div class="t" style="left:453.8px;top:649.50px;font-size:10.9px;color:#2b303b;font-weight:normal">计划状态</div>
<div class="t" style="left:534.0px;top:649.50px;font-size:10.9px;color:#2b303b;font-weight:normal">计划开始日期</div>
<div class="t" style="left:619.5px;top:649.50px;font-size:10.9px;color:#2b303b;font-weight:normal">计划完工日期</div>
<div class="t" style="left:704.5999999999999px;top:649.50px;font-size:10.9px;color:#2b303b;font-weight:normal">产品名称</div>
<div class="t" style="left:791.1999999999999px;top:649.50px;font-size:10.9px;color:#2b303b;font-weight:normal">产品编码</div>
<div class="t" style="left:855.5px;top:649.50px;font-size:10.9px;color:#2b303b;font-weight:normal">产品属性</div>
<div class="t" style="left:917.0999999999999px;top:649.50px;font-size:10.9px;color:#2b303b;font-weight:normal">规格型号</div>
<div class="t" style="left:982.4px;top:649.50px;font-size:10.9px;color:#2b303b;font-weight:normal">计划需求数量</div>
<div class="t" style="left:260.8px;top:678.10px;font-size:11px;letter-spacing:-0.25px;color:#2b303b">SCJHXSDD23092</div>
<div class="t" style="left:260.8px;top:694.80px;font-size:11px;letter-spacing:-0.25px;color:#2b303b">7-07-230927-06</div>
<div class="t" style="left:365.8px;top:678.10px;font-size:11px;letter-spacing:-0.25px;color:#2b303b">第9月-生产计</div>
<div class="t" style="left:365.8px;top:694.80px;font-size:11px;letter-spacing:-0.25px;color:#2b303b">划2023.9A05</div>
<div class="t" style="left:453.9px;top:678.10px;font-size:11px;letter-spacing:-0.25px;color:#2b303b">待计划</div>
<div class="t" style="left:533.9px;top:678.10px;font-size:11px;letter-spacing:-0.25px;color:#2b303b">2023/09/08</div>
<div class="t" style="left:619.4px;top:678.10px;font-size:11px;letter-spacing:-0.25px;color:#2b303b">2023/09/25</div>
<div class="t" style="left:704.6px;top:678.40px;font-size:11px;letter-spacing:-0.25px;color:#2b303b">144HZ显示器</div>
<div class="t" style="left:790.8px;top:678.40px;font-size:11px;letter-spacing:-0.25px;color:#2b303b">A0009</div>
<div class="t" style="left:855.5px;top:678.40px;font-size:11px;letter-spacing:-0.25px;color:#2b303b">组件</div>
<div class="t" style="left:917px;top:678.40px;font-size:11px;letter-spacing:-0.25px;color:#2b303b">HL6000</div>
<div class="t" style="left:1009px;top:678.40px;width:40px;text-align:right;font-size:11px;letter-spacing:-0.25px;color:#2b303b">20</div>
<div class="t" style="left:704.6px;top:707.00px;font-size:11px;letter-spacing:-0.25px;color:#2b303b">雷蛇键盘</div>
<div class="t" style="left:790.8px;top:707.00px;font-size:11px;letter-spacing:-0.25px;color:#2b303b">A0021</div>
<div class="t" style="left:855.5px;top:707.00px;font-size:11px;letter-spacing:-0.25px;color:#2b303b">组件</div>
<div class="t" style="left:917px;top:707.00px;font-size:11px;letter-spacing:-0.25px;color:#2b303b">GD200</div>
<div class="t" style="left:1009px;top:707.00px;width:40px;text-align:right;font-size:11px;letter-spacing:-0.25px;color:#2b303b">20</div>
<svg class="a" style="left:0;top:0" width="1080" height="724">
<g fill="#6a6a6a" fill-opacity="0.6">
<ellipse cx="734.7" cy="675" rx="14.5" ry="11.5"/>
<path d="M724 683 L722 689.5 L730 685.5 Z"/>
</g>
<circle cx="730.2" cy="670.9" r="1.6" fill="#fff" fill-opacity="0.75"/><circle cx="740.2" cy="670.9" r="1.6" fill="#fff" fill-opacity="0.75"/>
<ellipse cx="748.2" cy="684.2" rx="13.1" ry="11.5" fill="#fff" fill-opacity="0.7"/>
<g fill="#6a6a6a" fill-opacity="0.6">
<ellipse cx="748.2" cy="684.2" rx="12.1" ry="10.5"/>
<path d="M753 692 L757 696.5 L749 694 Z"/>
</g>
<circle cx="744.8" cy="680.8" r="1.5" fill="#fff" fill-opacity="0.75"/><circle cx="753.2" cy="680.8" r="1.5" fill="#fff" fill-opacity="0.75"/>
</svg>
<div class="a" style="left:769.5px;top:659.5px;height:40px;line-height:40px;font-size:30.5px;color:#6f6f6f;opacity:0.6;-webkit-text-stroke:0.7px #6f6f6f;letter-spacing:0.4px">公众号</div>
<div class="a" style="left:873.5px;top:677.5px;width:5px;height:5px;border-radius:50%;background:#6f6f6f;opacity:0.6"></div>
<div class="a" style="left:895.5px;top:659.5px;height:40px;line-height:40px;font-size:30.5px;color:#6f6f6f;opacity:0.6;-webkit-text-stroke:0.7px #6f6f6f;letter-spacing:-0.6px">保卫大狮兄</div>
</body></html>
